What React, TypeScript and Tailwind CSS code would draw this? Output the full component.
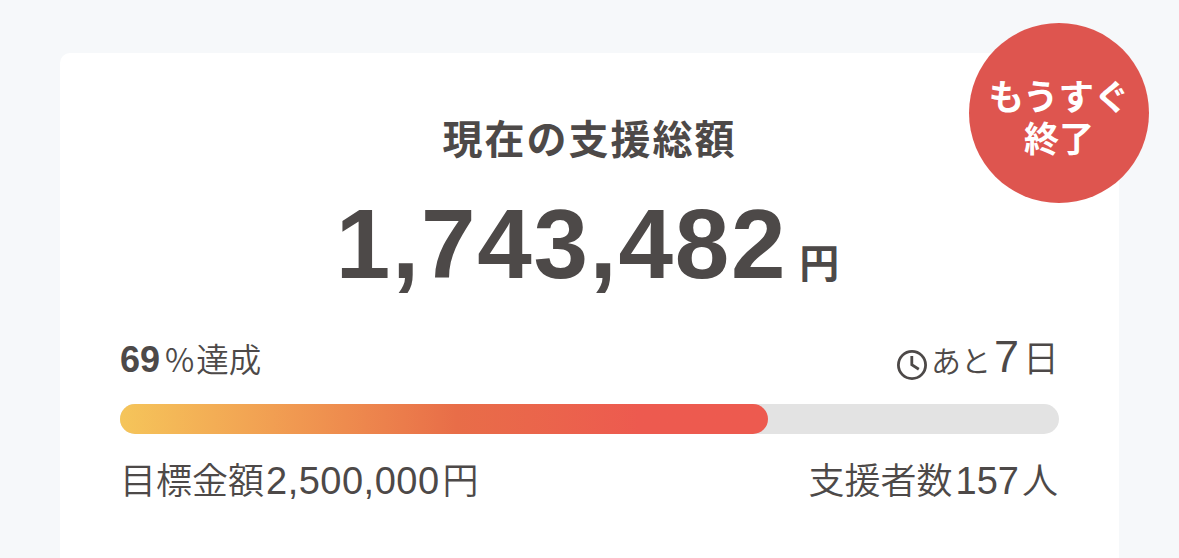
import React, { FC } from 'react'

const ClockIcon: FC = () => (
  <svg
    className="h-[30px] w-[30px] shrink-0"
    viewBox="0 0 30 30"
    fill="none"
    stroke="currentColor"
    strokeWidth="2.8"
  >
    <circle cx="15" cy="15" r="13.6" />
    <path d="M14.8 6V14.8L21.8 19.2" />
  </svg>
)

const Badge: FC = () => (
  <div className="absolute top-[-30px] right-[-30px] flex h-[180px] w-[180px] flex-col items-center justify-center rounded-full bg-[#de554f] pt-[11px] text-[35px] leading-[42px] font-bold text-white">
    <span className="text-[35.5px]">もうすぐ</span>
    <span>終了</span>
  </div>
)

const ProgressBar: FC<{ percent: number }> = ({ percent }) => (
  <div className="mt-[22px] h-[30px] rounded-full bg-[#e3e3e3]">
    <div
      className="h-full rounded-full bg-linear-to-r from-[#f5c55a] via-[#e86d48] via-52% to-[#ed5a4f] to-80%"
      style={{ width: `${percent}%` }}
    />
  </div>
)

export default function App() {
  return (
    <div className="h-[558px] overflow-hidden bg-[#f6f8fa] px-[60px] pt-[53px] font-['Liberation_Sans','Noto_Sans_CJK_JP',sans-serif] text-[#4d4948]">
      <div className="relative h-[540px] rounded-[10px] bg-white px-[60px] pt-[62px]">
        <Badge />
        <h1 className="h-[50px] text-center text-[40px] leading-[50px] font-bold tracking-[2px]">
          現在の支援総額
        </h1>
        <div className="mt-[29px] flex h-[100px] items-baseline justify-center pr-[4px] font-bold leading-[100px]">
          <span className="text-[98px] tracking-[1.7px]">1,743,482</span>
          <span className="ml-3 text-[40px]">円</span>
        </div>
        <div className="mt-[38px] flex h-[50px] items-baseline justify-between leading-[50px]">
          <div className="flex items-baseline">
            <span className="text-[36px] font-bold">69</span>
            <span className="ml-[5px] font-['Noto_Sans_CJK_JP'] text-[32px] font-[350]">
              %
            </span>
            <span className="ml-[2px] text-[32.5px] font-[350]">達成</span>
          </div>
          <div className="flex items-baseline">
            <span className="self-center pt-[10px]">
              <ClockIcon />
            </span>
            <span className="ml-1 pt-[2px] text-[30px] font-[350]">あと</span>
            <span className="ml-[3px] text-[45px]">7</span>
            <span className="ml-[4px] text-[36px] font-[350]">日</span>
          </div>
        </div>
        <ProgressBar percent={69} />
        <div className="mt-[22px] flex h-[50px] items-baseline justify-between leading-[50px]">
          <div className="flex items-baseline">
            <span className="text-[36px] font-[350]">目標金額</span>
            <span className="ml-[2px] text-[38px] tracking-[0.5px]">
              2,500,000
            </span>
            <span className="ml-[3px] text-[36px] font-[350]">円</span>
          </div>
          <div className="flex items-baseline pr-px">
            <span className="text-[36px] font-[350]">支援者数</span>
            <span className="ml-[3px] text-[38px]">157</span>
            <span className="ml-[3px] text-[36px] font-[350]">人</span>
          </div>
        </div>
      </div>
    </div>
  )
}
